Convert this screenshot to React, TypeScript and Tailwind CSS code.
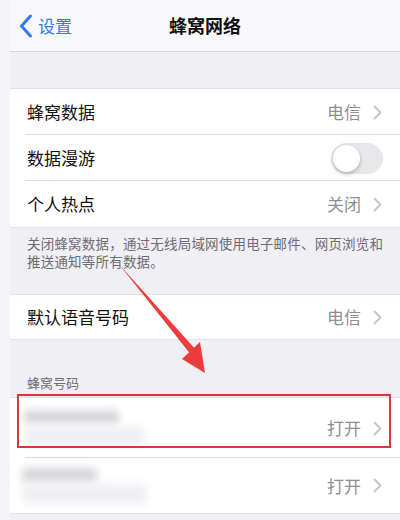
const font = { fontFamily: '"Noto Sans CJK SC", "Noto Sans", sans-serif' };

function Chevron() {
  return (
    <svg width="9" height="15" viewBox="0 0 9 15" className="ml-[12px]">
      <path d="M1.5 1.5 L7.5 7.5 L1.5 13.5" fill="none" stroke="#c4c4c9" strokeWidth="1.8" strokeLinecap="round" strokeLinejoin="round" />
    </svg>
  );
}

function Row({ label, value, last, height = "h-[46px]" }: { label: string; value?: string; last?: boolean; height?: string }) {
  return (
    <div className={`relative flex items-center pl-[17px] pr-[18px] ${height}`}>
      <span className="text-[17px] text-[#111]">{label}</span>
      <div className="ml-auto flex items-center">
        {value && <span className="text-[17px] text-[#8e8e93]">{value}</span>}
        <Chevron />
      </div>
      {!last && <div className="absolute bottom-0 left-[15px] right-0 h-px bg-[#dcdce0]" />}
    </div>
  );
}

function Redacted({ rows }: { rows: [string, string] }) {
  return (
    <div className="flex flex-col gap-[2px]">
      <div className={`h-[14px] rounded bg-[#d6d6da] blur-[4px] ${rows[0]}`} />
      <div className={`h-[20px] rounded bg-[#f0eff2] blur-[4px] ${rows[1]}`} />
    </div>
  );
}

export default function App() {
  return (
    <div className="flex h-[520px] w-[400px] overflow-hidden bg-[#f4f4f6]" style={font}>
      <div className="w-[10px] shrink-0 bg-[#f5f5f7]" />
      <div className="relative flex-1 bg-[#efeff4]">
        <div className="relative flex h-[52px] items-center justify-center border-b border-[#d6d6da] bg-[#f8f8fa]">
          <div className="absolute left-[9px] top-0 flex h-full items-center text-[#2f7bf5]">
            <svg width="14" height="24" viewBox="0 0 14 24">
              <path d="M11.5 2 L2.5 12 L11.5 22" fill="none" stroke="#2f7bf5" strokeWidth="3" strokeLinecap="round" strokeLinejoin="round" />
            </svg>
            <span className="ml-[5px] text-[17px]">设置</span>
          </div>
          <span className="text-[18px] font-bold text-[#111]">蜂窝网络</span>
        </div>

        <div className="h-[36px]" />

        <div className="border-y border-[#e2e2e6] bg-white">
          <Row label="蜂窝数据" value="电信" />
          <div className="relative flex h-[46px] items-center pl-[17px] pr-[17px]">
            <span className="text-[17px] text-[#111]">数据漫游</span>
            <div className="ml-auto flex h-[31px] w-[52px] items-center rounded-full bg-[#e8e8ea] p-[2px]">
              <div className="h-[27px] w-[27px] rounded-full bg-white shadow-[0_2px_4px_rgba(0,0,0,0.25)]" />
            </div>
            <div className="absolute bottom-0 left-[15px] right-0 h-px bg-[#dcdce0]" />
          </div>
          <Row label="个人热点" value="关闭" last />
        </div>

        <div className="h-[66px] pl-[17px] pr-[8px] pt-[6px] text-[13.5px] leading-[18px] tracking-[0.2px] text-[#6d6d72]">
          关闭蜂窝数据，通过无线局域网使用电子邮件、网页浏览和推送通知等所有数据。
        </div>

        <div className="border-y border-[#e2e2e6] bg-white">
          <Row label="默认语音号码" value="电信" last height="h-[44px]" />
        </div>

        <div className="flex h-[57px] items-end px-[17px] pb-[5px] text-[13px] text-[#6d6d72]">蜂窝号码</div>

        <div className="border-y border-[#e2e2e6] bg-white">
          <div className="relative flex h-[60px] items-center pl-[14px] pr-[18px]">
            <Redacted rows={["w-[95px]", "w-[120px]"]} />
            <div className="ml-auto flex items-center">
              <span className="text-[17px] text-[#8e8e93]">打开</span>
              <Chevron />
            </div>
            <div className="absolute bottom-0 left-[15px] right-0 h-px bg-[#dcdce0]" />
          </div>
          <div className="flex h-[55px] items-center pl-[12px] pr-[18px]">
            <Redacted rows={["w-[75px]", "w-[125px]"]} />
            <div className="ml-auto flex items-center">
              <span className="text-[17px] text-[#8e8e93]">打开</span>
              <Chevron />
            </div>
          </div>
        </div>

        <div className="pointer-events-none absolute left-[7px] top-[394px] h-[54px] w-[374px] border-2 border-[#d9363a]" />

        <svg className="pointer-events-none absolute left-0 top-0" width="390" height="520" viewBox="0 0 390 520">
          <path d="M107 262 L187 351 L182 356 L108 263 Z" fill="#ee3b3b" />
          <path d="M195 373 L172 359 L190 342 Z" fill="#ee3b3b" />
        </svg>
      </div>
    </div>
  );
}
